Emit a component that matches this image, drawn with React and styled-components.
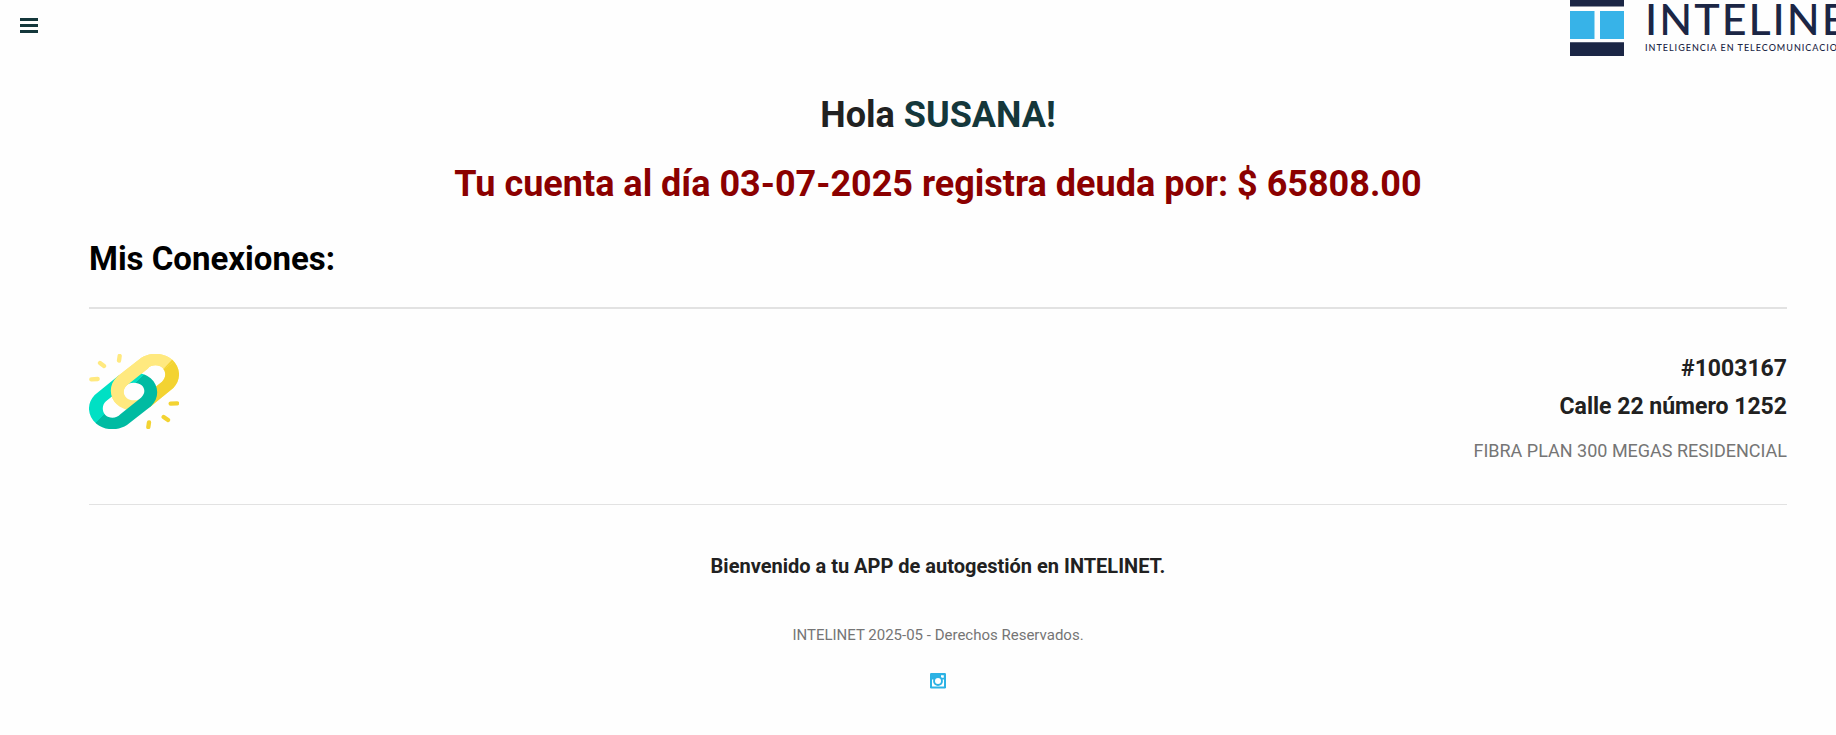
import React from 'react';
import styled, {createGlobalStyle} from 'styled-components';

const connections = [
	{id: '1003167', address: 'Calle 22 número 1252', plan: 'FIBRA PLAN 300 MEGAS RESIDENCIAL'},
];

export default function App() {
	return (
		<>
			<GlobalStyle/>
			<Header>
				<MenuButton type='button' aria-label='Menú'>
					<MenuBar/>
					<MenuBar/>
					<MenuBar/>
				</MenuButton>
				<Logo/>
			</Header>
			<Main>
				<Greeting>Hola <UserName>SUSANA!</UserName></Greeting>
				<Debt>Tu cuenta al día 03-07-2025 registra deuda por: $ 65808.00</Debt>
				<SectionTitle>Mis Conexiones:</SectionTitle>
				<ConnectionList>
					{connections.map(item => (
						<Connection key={item.id}>
							<ChainIcon/>
							<Details>
								<Strong>#{item.id}</Strong>
								<Strong>{item.address}</Strong>
								<Plan>{item.plan}</Plan>
							</Details>
						</Connection>
					))}
				</ConnectionList>
				<Welcome>Bienvenido a tu APP de autogestión en INTELINET.</Welcome>
				<Footer>
					<Rights>INTELINET 2025-05 - Derechos Reservados.</Rights>
					<SocialLink href='#instagram' aria-label='Instagram'>
						<InstagramIcon/>
					</SocialLink>
				</Footer>
			</Main>
		</>
	);
}

function Logo() {
	return (
		<LogoWrapper>
			<svg width='54' height='56' viewBox='0 0 54 56' aria-hidden='true'>
				<path fill='#1b2645' d='M0 0h54v6.5H0zM0 42.3h54V56H0z'/>
				<path fill='#37b3e8' d='M0 11h24.5v28H0zM30 11h24v28H30z'/>
			</svg>
			<LogoText>
				<LogoName>INTELINET</LogoName>
				<LogoTagline>INTELIGENCIA EN TELECOMUNICACIONES</LogoTagline>
			</LogoText>
		</LogoWrapper>
	);
}

/* both links use the same shape, the green one is turned half way round */
const linkPath = 'M183 54C211 36 249 37 275 58C303 82 304 119 280 144L210 201C180 216 136 216 112 194C86 171 86 134 111 110ZM203 86L141 136C128 148 128 162 139 173C151 184 176 184 189 171L246 125C258 114 259 96 248 84C237 73 214 73 203 86Z';

function YellowLink() {
	return (
		<>
			<path d={linkPath} fill='#ffe97f' fillRule='evenodd'/>
			<path d={linkPath} fill='#f3d332' fillRule='evenodd' clipPath='url(#shade)'/>
		</>
	);
}

function ChainIcon() {
	return (
		<svg width='90' height='75' viewBox='27 42 270 225' aria-hidden='true'>
			<defs>
				<linearGradient id='green' gradientUnits='userSpaceOnUse' x1='0' y1='0' x2='337' y2='337'>
					<stop offset='.5' stopColor='#00bba2'/>
					<stop offset='.5' stopColor='#00e0c4'/>
				</linearGradient>
				<clipPath id='shade'>
					<path d='M279 56L210 130V210H310V56Z'/>
				</clipPath>
				<clipPath id='front'>
					<path d='M0 0H324V33L162 155L0 277Z'/>
				</clipPath>
			</defs>
			<YellowLink/>
			<path d={linkPath} fill='url(#green)' fillRule='evenodd' transform='rotate(180 162 154.5)'/>
			{/* yellow goes over green on the upper side only */}
			<g clipPath='url(#front)'>
				<YellowLink/>
			</g>
			<g fill='none' strokeWidth='13' strokeLinecap='round'>
				<path stroke='#ffe97f' d='M34 118L53 117M60 69L72 78M119 48L117 62'/>
				<path stroke='#f3d332' d='M272 191L291 190M251 231L264 240M207 247L205 261'/>
			</g>
		</svg>
	);
}

function InstagramIcon() {
	return (
		<svg width='16' height='16' viewBox='0 0 16 16' aria-hidden='true'>
			<rect width='16' height='15.5' rx='1.2' fill='#2cb2e4'/>
			<path fill='#fff' d='M2 6.5h12v7H2zM11 2.2h2.8v2.6H11z'/>
			<circle cx='8' cy='8' r='4.9' fill='#2cb2e4'/>
			<circle cx='8' cy='8' r='3' fill='#fff'/>
		</svg>
	);
}


const GlobalStyle = createGlobalStyle`
*{
	box-sizing: border-box;
}
body{
	margin: 0;
	background: #fefefe;
	color: #212121;
	font-family: Roboto, sans-serif;
}
h1, h2, h3, p, ul{
	margin: 0;
	padding: 0;
}
svg{
	display: block;
	flex-shrink: 0;
}
`;

const Header = styled.header`
display: flex;
justify-content: space-between;
align-items: flex-start;
height: 56px;
padding-left: 20px;
`;

const MenuButton = styled.button`
display: flex;
flex-direction: column;
gap: 3px;
padding: 18px 0;
border: none;
background: none;
cursor: pointer;
`;

const MenuBar = styled.span`
width: 18px;
height: 3px;
background: #14373b;
`;

const LogoWrapper = styled.div`
display: flex;
gap: 21px;
width: 266px;
overflow: hidden;
`;

const LogoText = styled.div`
color: #1b2645;
font-family: Lato, sans-serif;
font-weight: 500;
white-space: nowrap;
`;

const LogoName = styled.div`
font-size: 43px;
line-height: 38px;
letter-spacing: 2px;
`;

const LogoTagline = styled.div`
font-size: 9px;
line-height: 20px;
letter-spacing: 1px;
`;

const Main = styled.main`
padding: 37px 49px 0 89px;
text-align: center;
`;

const Greeting = styled.h1`
font-size: 36px;
line-height: 44px;
`;

const UserName = styled.span`
color: #14373b;
`;

const Debt = styled.h2`
margin-top: 25px;
color: #8b0000;
font-size: 36px;
line-height: 44px;
`;

const SectionTitle = styled.h2`
padding: 31px 0 26px;
border-bottom: 2px solid #e2e2e2;
color: #000;
font-size: 33px;
line-height: 44px;
text-align: left;
`;

const ConnectionList = styled.ul`
list-style: none;
`;

const Connection = styled.li`
display: flex;
justify-content: space-between;
align-items: flex-start;
padding: 45px 0 39px;
border-bottom: 1px solid #e2e2e2;
`;

const Details = styled.div`
padding-top: 1px;
text-align: right;
`;

const Strong = styled.h3`
margin-bottom: 10px;
font-size: 23px;
line-height: 28px;
`;

const Plan = styled.p`
padding-top: 6px;
color: #757575;
font-size: 18px;
line-height: 28px;
`;

const Welcome = styled.h3`
margin-top: 47px;
font-size: 20px;
line-height: 28px;
`;

const Footer = styled.footer`
display: flex;
flex-direction: column;
align-items: center;
gap: 26px;
padding: 43px 0;
`;

const Rights = styled.p`
color: #757575;
font-size: 15px;
line-height: 24px;
`;

const SocialLink = styled.a`
display: block;
`;
